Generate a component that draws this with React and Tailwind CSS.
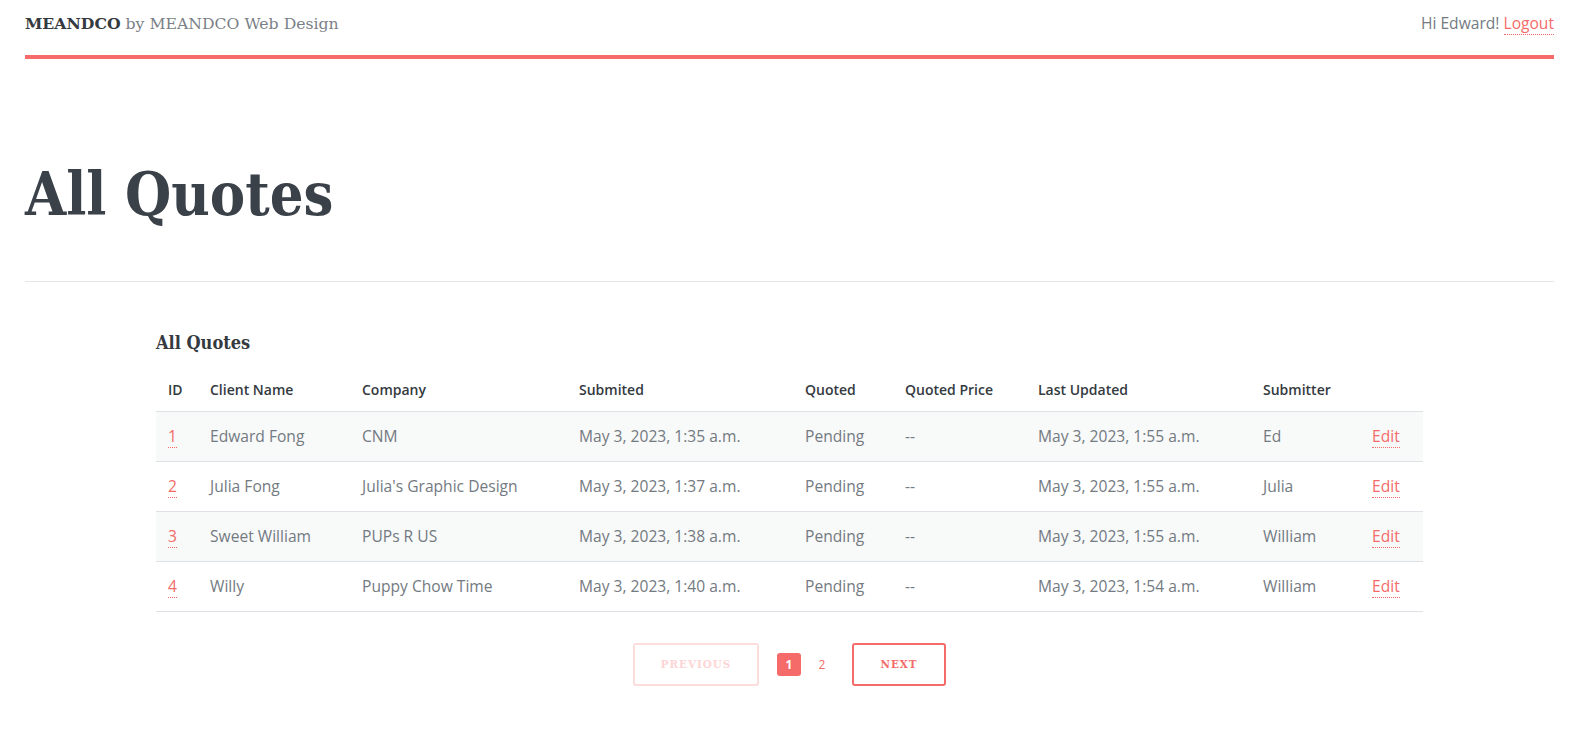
import React from 'react';

const slab = { fontFamily: '"DejaVu Serif Condensed", "DejaVu Serif", serif' };
const slabWide = { fontFamily: '"DejaVu Serif", serif' };

const quotes = [
  { id: 1, client: 'Edward Fong', company: 'CNM', submitted: 'May 3, 2023, 1:35 a.m.', updated: 'May 3, 2023, 1:55 a.m.', submitter: 'Ed' },
  { id: 2, client: 'Julia Fong', company: "Julia's Graphic Design", submitted: 'May 3, 2023, 1:37 a.m.', updated: 'May 3, 2023, 1:55 a.m.', submitter: 'Julia' },
  { id: 3, client: 'Sweet William', company: 'PUPs R US', submitted: 'May 3, 2023, 1:38 a.m.', updated: 'May 3, 2023, 1:55 a.m.', submitter: 'William' },
  { id: 4, client: 'Willy', company: 'Puppy Chow Time', submitted: 'May 3, 2023, 1:40 a.m.', updated: 'May 3, 2023, 1:54 a.m.', submitter: 'William' },
];

const cols = ['w-[42px]', 'w-[152px]', 'w-[217px]', 'w-[226px]', 'w-[100px]', 'w-[133px]', 'w-[225px]', 'w-[109px]', 'w-[63px]'];

export default function App() {
  return (
    <div className="min-h-screen bg-white pl-[25px] pr-[23px] text-[#737a81]" style={{ fontFamily: '"Open Sans", sans-serif' }}>
      {/* Header */}
      <header className="flex justify-between items-center h-[59px] border-b-4 border-[#f46b69]">
        <div className="text-[15.7px] text-[#7a7f86] -mt-[8px]" style={slabWide}>
          <span className="font-bold text-[#343a40]">MEANDCO</span> by MEANDCO Web Design
        </div>
        <div className="text-[15.6px] -mt-[8px]">
          Hi Edward!{' '}
          <a href="#" className="text-[#f46b69] border-b border-dotted border-[#f46b69]">Logout</a>
        </div>
      </header>

      {/* Page title */}
      <div className="pt-[101px] pb-[50px] border-b border-[#e6e6e6]">
        <h1 className="text-[59px] leading-[1.2] font-bold text-[#3a4148]" style={slab}>All Quotes</h1>
      </div>

      {/* Table */}
      <div className="w-[1267px] ml-[131px] pt-[47px]">
        <h2 className="text-[18px] font-bold text-[#343a40] mb-[12px]" style={slab}>All Quotes</h2>
        <table className="w-full table-fixed border-collapse">
          <thead>
            <tr className="border-b border-[#dee2e6] text-left text-[#343a40] text-[14px]">
              {['ID', 'Client Name', 'Company', 'Submited', 'Quoted', 'Quoted Price', 'Last Updated', 'Submitter', ''].map((h, i) => (
                <th key={i} className={`${cols[i]} px-[12px] h-[44px] font-semibold`}>{h}</th>
              ))}
            </tr>
          </thead>
          <tbody>
            {quotes.map((q, i) => (
              <tr key={q.id} className={`border-b border-[#dee2e6] text-[15.6px] ${i % 2 === 0 ? 'bg-[#f8f9f9]' : 'bg-white'}`}>
                <td className="px-[12px] h-[50px]">
                  <a href="#" className="text-[#f46b69] border-b border-dotted border-[#f46b69]">{q.id}</a>
                </td>
                <td className="px-[12px]">{q.client}</td>
                <td className="px-[12px]">{q.company}</td>
                <td className="px-[12px]">{q.submitted}</td>
                <td className="px-[12px]">Pending</td>
                <td className="px-[12px]">--</td>
                <td className="px-[12px]">{q.updated}</td>
                <td className="px-[12px]">{q.submitter}</td>
                <td className="px-[12px]">
                  <a href="#" className="text-[#f46b69] border-b border-dotted border-[#f46b69]">Edit</a>
                </td>
              </tr>
            ))}
          </tbody>
        </table>

        {/* Pagination */}
        <div className="flex justify-center items-center mt-[31px] pb-[40px]">
          <button className="w-[126px] h-[43px] rounded-[3px] border-2 border-[#fddcdc] text-[#fdd5d5] text-[11.5px] font-bold tracking-[1px]" style={slab}>
            PREVIOUS
          </button>
          <span className="ml-[18px] w-[24px] h-[23px] rounded-[3px] bg-[#f46b69] text-white text-[12px] font-bold flex items-center justify-center">1</span>
          <span className="ml-[15px] w-[12px] text-center text-[12px] text-[#f46b69]">2</span>
          <button className="ml-[24px] w-[94px] h-[43px] rounded-[3px] border-2 border-[#f46b69] text-[#f46b69] text-[11.5px] font-bold tracking-[1px]" style={slab}>
            NEXT
          </button>
        </div>
      </div>
    </div>
  );
}
